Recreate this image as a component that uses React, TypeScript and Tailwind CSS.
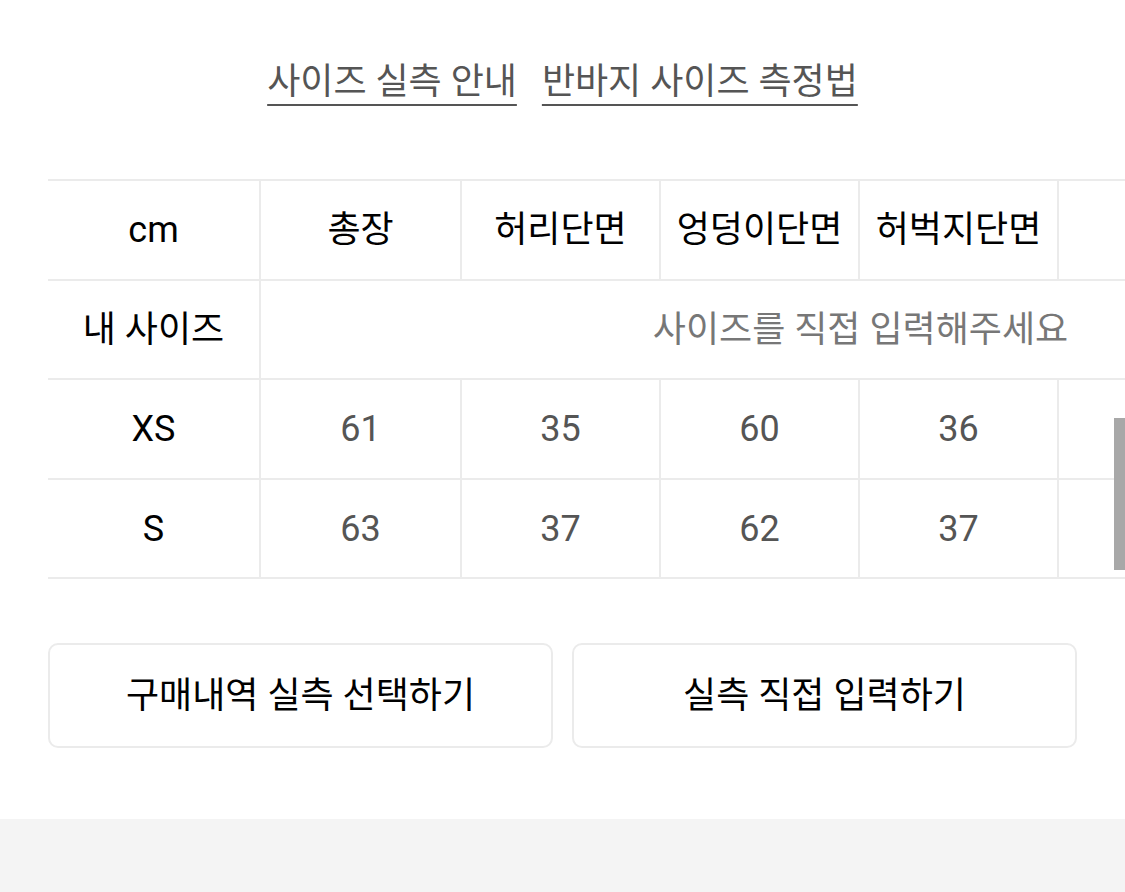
import React from "react";

const cols = ["총장", "허리단면", "엉덩이단면", "허벅지단면", ""];
const rows: { label: string; vals: string[]; h: string }[] = [
  { label: "XS", vals: ["61", "35", "60", "36", ""], h: "h-[100px]" },
  { label: "S", vals: ["63", "37", "62", "37", ""], h: "h-[99px]" },
];

export default function App() {
  return (
    <div
      className="w-[1125px] h-[892px] bg-white flex flex-col overflow-hidden relative"
      style={{ fontFamily: '"Roboto", "Noto Sans CJK KR", sans-serif' }}
    >
      <div className="flex justify-center gap-[25px] pt-[58px] h-[179px] text-[36px] text-[#555555]">
        <span className="underline decoration-[2px] underline-offset-[10px] leading-[48px]">사이즈 실측 안내</span>
        <span className="underline decoration-[2px] underline-offset-[10px] leading-[48px]">반바지 사이즈 측정법</span>
      </div>

      <div className="pl-[48px] overflow-hidden">
        <div className="w-[1412px] border-t-2 border-[#ebebeb] text-[36px]">
          <div className="flex h-[100px] border-b-2 border-[#ebebeb] text-black">
            <div className="w-[213px] shrink-0 flex items-center justify-center border-r-2 border-[#ebebeb]">cm</div>
            {cols.map((c, i) => (
              <div key={i} className={`${i === 0 ? "w-[201px]" : "w-[199px]"} shrink-0 flex items-center justify-center border-r-2 border-[#ebebeb]`}>
                {c}
              </div>
            ))}
          </div>
          <div className="flex h-[99px] border-b-2 border-[#ebebeb]">
            <div className="w-[213px] shrink-0 flex items-center justify-center border-r-2 border-[#ebebeb] text-black">내 사이즈</div>
            <div className="flex-1 flex items-center justify-center text-[#777777]">사이즈를 직접 입력해주세요</div>
          </div>
          {rows.map((r) => (
            <div key={r.label} className={`flex ${r.h} border-b-2 border-[#ebebeb]`}>
              <div className="w-[213px] shrink-0 flex items-center justify-center border-r-2 border-[#ebebeb] text-black">{r.label}</div>
              {r.vals.map((v, i) => (
                <div key={i} className={`${i === 0 ? "w-[201px]" : "w-[199px]"} shrink-0 flex items-center justify-center border-r-2 border-[#ebebeb] text-[#555555]`}>
                  {v}
                </div>
              ))}
            </div>
          ))}
        </div>
      </div>

      <div className="flex gap-[19px] px-[48px] pt-[64px]">
        <button className="w-[506px] h-[105px] rounded-[10px] border-2 border-[#ebebeb] bg-white text-[36px] text-black flex items-center justify-center">
          구매내역 실측 선택하기
        </button>
        <button className="w-[506px] h-[105px] rounded-[10px] border-2 border-[#ebebeb] bg-white text-[36px] text-black flex items-center justify-center">
          실측 직접 입력하기
        </button>
      </div>

      <div className="mt-auto h-[73px] bg-[#f4f4f4]" />

      <div className="absolute right-0 top-[418px] w-[11px] h-[152px] bg-[#a8a8a8]" />
    </div>
  );
}
